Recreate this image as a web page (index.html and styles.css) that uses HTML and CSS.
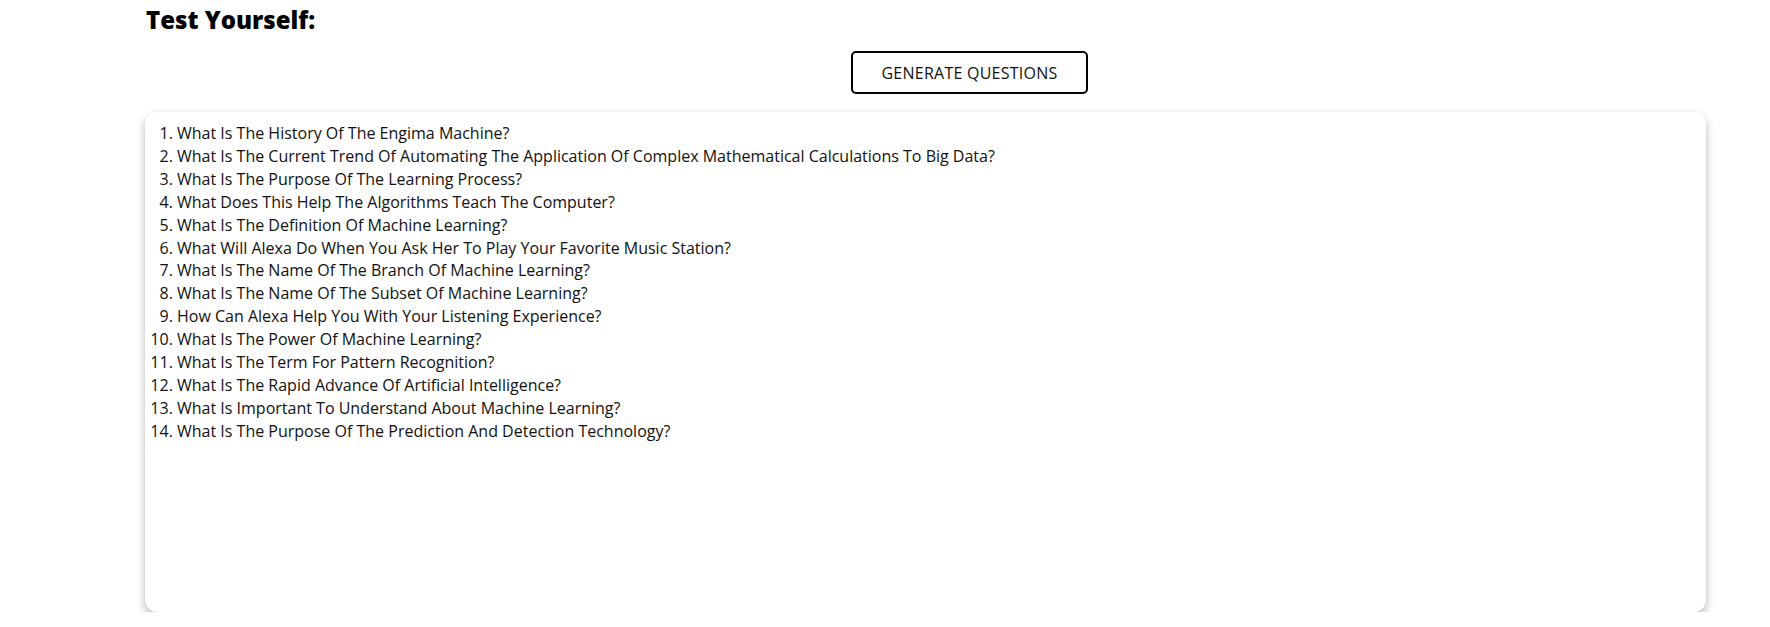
FILE: index.html
```html
<!DOCTYPE html>
<html lang="en">
<head>
<meta charset="utf-8">
<title>Test Yourself</title>
<link rel="stylesheet" href="styles.css">
</head>
<body>
<section class="quiz">
  <h2 class="quiz-title">Test Yourself:</h2>
  <div class="quiz-actions">
    <button class="generate-btn" type="button">GENERATE QUESTIONS</button>
  </div>
  <div class="questions-card">
    <ol class="questions">
      <li>What Is The History Of The Engima Machine?</li>
      <li>What Is The Current Trend Of Automating The Application Of Complex Mathematical Calculations To Big Data?</li>
      <li>What Is The Purpose Of The Learning Process?</li>
      <li>What Does This Help The Algorithms Teach The Computer?</li>
      <li>What Is The Definition Of Machine Learning?</li>
      <li>What Will Alexa Do When You Ask Her To Play Your Favorite Music Station?</li>
      <li>What Is The Name Of The Branch Of Machine Learning?</li>
      <li>What Is The Name Of The Subset Of Machine Learning?</li>
      <li>How Can Alexa Help You With Your Listening Experience?</li>
      <li>What Is The Power Of Machine Learning?</li>
      <li>What Is The Term For Pattern Recognition?</li>
      <li>What Is The Rapid Advance Of Artificial Intelligence?</li>
      <li>What Is Important To Understand About Machine Learning?</li>
      <li>What Is The Purpose Of The Prediction And Detection Technology?</li>
    </ol>
  </div>
</section>
</body>
</html>
```
FILE: styles.css
```css
* {
  box-sizing: border-box;
}

html, body {
  margin: 0;
  padding: 0;
  background: #ffffff;
}

body {
  font-family: "Open Sans", "Noto Sans", sans-serif;
  color: #111111;
}

.quiz {
  width: 1561px;
  margin-left: 145px;
}

.quiz-title {
  margin: 4px 0 0 1px;
  font-size: 24px;
  line-height: 32px;
  font-weight: 800;
  color: #000000;
}

.quiz-actions {
  display: flex;
  margin-top: 15px;
}

.generate-btn {
  margin-left: 706px;
  width: 237px;
  height: 43px;
  padding: 0;
  background: #ffffff;
  border: 2px solid #000000;
  border-radius: 5px;
  font-family: "Open Sans", "Noto Sans", sans-serif;
  font-size: 16px;
  letter-spacing: 0.25px;
  color: #111111;
  cursor: pointer;
}

.questions-card {
  margin-top: 18px;
  height: 500px;
  background: #ffffff;
  border-radius: 12px;
  box-shadow: 0 4px 8px rgba(0, 0, 0, 0.3);
  padding: 10px 20px 0 32px;
}

.questions {
  margin: 0;
  padding: 0;
  font-size: 16px;
  line-height: 22.9px;
  color: #111111;
}
```
